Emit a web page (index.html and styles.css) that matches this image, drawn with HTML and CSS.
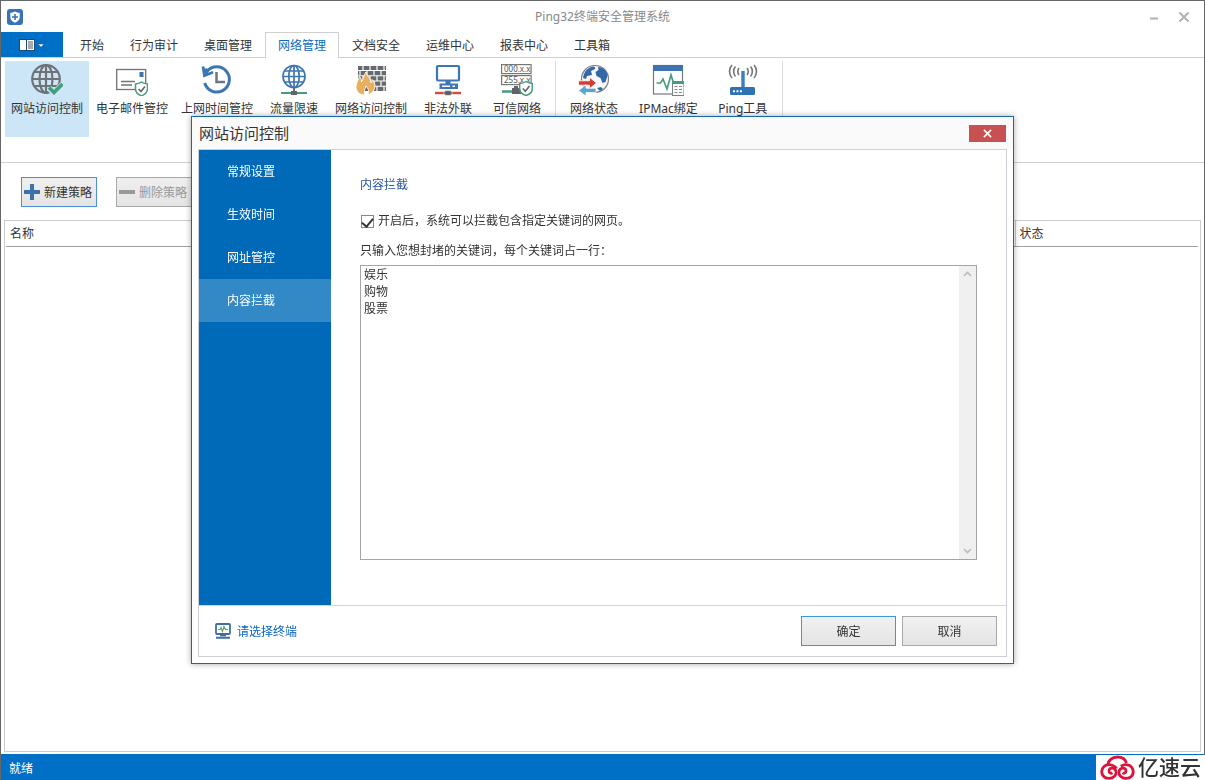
FILE: index.html
```html
<!DOCTYPE html>
<html lang="zh-CN">
<head>
<meta charset="utf-8">
<title>Ping32终端安全管理系统</title>
<link rel="stylesheet" href="styles.css">
</head>
<body>
<div class="window">
  <header class="titlebar">
    <svg class="app-icon" viewBox="0 0 16 16"><rect width="16" height="16" rx="3" fill="#3a72b8"/><path d="M8 2.500c1.500 1 3 1.300 4.700 1.300V8c0 2.800-2 4.500-4.700 5.700C5.300 12.500 3.300 10.800 3.300 8V3.800C5 3.800 6.500 3.500 8 2.500z" fill="#fff"/><path d="M8 5v6M5 8h6" stroke="#3a72b8" stroke-width="1.600"/></svg>
    <h1 class="app-title">Ping32终端安全管理系统</h1>
    <div class="window-buttons">
      <button class="win-btn" type="button" aria-label="最小化"><svg viewBox="0 0 12 12"><path d="M2 7.500h8" stroke="#b0b0b0" stroke-width="2"/></svg></button>
      <button class="win-btn" type="button" aria-label="关闭"><svg viewBox="0 0 12 12"><path d="M1.500 1.500l9 9M10.500 1.500l-9 9" stroke="#b0b0b0" stroke-width="2"/></svg></button>
    </div>
  </header>

  <nav class="tabs">
    <button class="file-tab" type="button" aria-label="文件">
      <svg viewBox="0 0 26 12"><rect x=".5" y=".5" width="15" height="11" fill="#fff" stroke="#174a7c"/><path d="M7.500 0v12" stroke="#174a7c"/><path d="M9 3h5M9 5h5M9 7h5M9 9h5" stroke="#444" stroke-width=".9"/><path d="M19 5h6l-3 3.300z" fill="#fff" stroke="#174a7c" stroke-width=".5"/></svg>
    </button>
    <button class="tab" type="button">开始</button>
    <button class="tab" type="button">行为审计</button>
    <button class="tab" type="button">桌面管理</button>
    <button class="tab active" type="button">网络管理</button>
    <button class="tab" type="button">文档安全</button>
    <button class="tab" type="button">运维中心</button>
    <button class="tab" type="button">报表中心</button>
    <button class="tab" type="button">工具箱</button>
  </nav>

  <section class="ribbon">
    <div class="group">
      <button class="tool active" type="button">
        <svg viewBox="0 0 32 32" fill="none"><g stroke="#6f7276" stroke-width="2.200"><circle cx="15" cy="15" r="13.800"/><ellipse cx="15" cy="15" rx="6.500" ry="13.800"/><path d="M15 1v28M1 15h28M3.500 8h23M3.500 22h23"/></g><path d="M18 24l5 5 8.500-8.500" stroke="#cde6f7" stroke-width="6"/><path d="M18 23.500l5 5 8.500-8.500" stroke="#3f9f78" stroke-width="3.600"/></svg>
        <span>网站访问控制</span></button>
      <button class="tool" type="button">
        <svg viewBox="0 0 32 32" fill="none"><rect x=".7" y="5.500" width="29" height="20" stroke="#707376" stroke-width="1.300"/><rect x="23.500" y="8" width="4" height="5" fill="#3c73b0"/><path d="M5 17.500h14M5 21h11" stroke="#707376" stroke-width="1.300"/><path d="M25.500 18c2 1.400 4 1.900 6 1.900v5c0 3.500-2.500 5.500-6 7-3.500-1.500-6-3.500-6-7v-5c2 0 4-.5 6-1.900z" fill="#fff" stroke="#459d79" stroke-width="1.500"/><path d="M22.500 25l2.500 2.500 4-5" stroke="#60666a" stroke-width="1.600"/></svg>
        <span>电子邮件管控</span></button>
      <button class="tool" type="button">
        <svg viewBox="0 0 32 32" fill="none"><path d="M6 7.500A12.600 12.600 0 1 1 3.700 19" stroke="#3c76b3" stroke-width="3"/><path d="M2 2.500l1.500 9 8.500-3.200" stroke="#3c76b3" stroke-width="2.800"/><path d="M4.500 4.500L6 10" stroke="#3c76b3" stroke-width="3"/><path d="M15.500 8v10H24" stroke="#70757a" stroke-width="2.500"/></svg>
        <span>上网时间管控</span></button>
      <button class="tool" type="button">
        <svg viewBox="0 0 32 32" fill="none"><g stroke="#3c76b3" stroke-width="1.700"><circle cx="16" cy="12.500" r="11"/><ellipse cx="16" cy="12.500" rx="5.200" ry="11"/><path d="M16 1.500v22M5 12.500h22M7 7h18M7 18h18"/></g><path d="M16 24v4" stroke="#6c6f72" stroke-width="2"/><path d="M3 29h26" stroke="#459d79" stroke-width="2"/><rect x="13" y="27" width="6" height="4" fill="#606468"/></svg>
        <span>流量限速</span></button>
      <button class="tool" type="button">
        <svg viewBox="0 0 32 32" fill="none"><path d="M3 4h28M3 9.200h28M3 14.400h28M3 19.600h28M3 24.800h28" stroke="#66696d" stroke-width="4.200"/><path d="M8 2v4M15 2v4M22 2v4M29 2v4M5 7v4M12 7v4M19 7v4M26 7v4M8 12v5M15 12v5M22 12v5M29 12v5M19 17v5M26 17v5M22 22v5M29 22v5" stroke="#fff" stroke-width="1.200"/><path d="M10 31C4 31 1 27 1 22.500c0-4 2.500-6 3.500-10 2 2 2 4 1.800 5.500C9 15 8.500 11 11 8c.5 4 5 6 5 11 1-.8 1.200-2 1-3.500 3 3 3.500 6 2.500 9-1 3.500-3.500 5.500-7 6.500 2-3 1.200-6-1.500-9-.8 3-2.500 4-1 9z" fill="#e8b05c" stroke="#fff" stroke-width=".9"/></svg>
        <span>网络访问控制</span></button>
      <button class="tool" type="button">
        <svg viewBox="0 0 32 32" fill="none"><rect x="5" y="2" width="22" height="14.500" rx="1" stroke="#3c76b3" stroke-width="2.200"/><path d="M16 17v3" stroke="#3c76b3" stroke-width="5"/><path d="M7.500 19.500h18.500v5.500h-18.500z" fill="#3c76b3"/><path d="M10 22.300h8M20.500 22.300h2.500" stroke="#fff" stroke-width="1.500"/><path d="M3 29h26" stroke="#d64b3b" stroke-width="2.400"/><path d="M11.500 29l2-2.500h5l2 2.500-2 2.500h-5z" fill="#606468" stroke="#fff" stroke-width=".6"/></svg>
        <span>非法外联</span></button>
      <button class="tool" type="button">
        <svg viewBox="0 0 32 32" fill="none"><rect x=".6" y=".6" width="29.500" height="9" fill="#fff" stroke="#777" stroke-width="1.200"/><rect x=".6" y="11.600" width="29.500" height="9" fill="#fff" stroke="#777" stroke-width="1.200"/><text class="ip-text" x="3" y="8">000.x.x</text><text class="ip-text" x="3" y="19">255.x.x</text><path d="M1 27.500h10" stroke="#459d79" stroke-width="2.500"/><path d="M15 22v3" stroke="#606468" stroke-width="4"/><rect x="11" y="24" width="9" height="6" fill="#606468"/><path d="M25 17.500c2 1.400 4 2 6.300 2v5c0 3.500-2.800 5.800-6.300 7-3.500-1.200-6.300-3.500-6.300-7v-5c2.300 0 4.300-.6 6.300-2z" fill="#fff" stroke="#459d79" stroke-width="1.500"/><path d="M21.800 24.500l2.500 2.700 4.200-5.200" stroke="#60666a" stroke-width="1.600"/></svg>
        <span>可信网络</span></button>
    </div>
    <div class="group wide">
      <button class="tool" type="button">
        <svg viewBox="0 0 32 32" fill="none"><circle cx="17" cy="15" r="13.500" fill="#f7f9fb" stroke="#747c86" stroke-width="1.200"/><path d="M5 14C6 8 9 4 15 2.500c2 0 2.500 1 2 2.500l-4 2 1 4-5 1-1 3zM20 3c5 0 9 4 9.500 9l-2 6-3 1-2-5-4-2-1-4 3-2zM19 24l4-1 2 2-3 2z" fill="#3467a8"/><path d="M.5 16.800h11v-3.500l7 5.700-7 5.700v-3.500H.5z" fill="#d1402f" stroke="#fff" stroke-width=".8"/><path d="M18 24.200H8v-3.500L.5 26.500 8 32v-3.500h10z" fill="#59a5cd" stroke="#fff" stroke-width=".8"/></svg>
        <span>网络状态</span></button>
      <button class="tool" type="button">
        <svg viewBox="0 0 32 32" fill="none"><rect x="1.500" y="1.500" width="29" height="28.500" fill="#fff" stroke="#73777b" stroke-width="1.200"/><path d="M1 1h30v6H1z" fill="#3c73b0"/><path d="M4.500 19h4l2.500-4 4 10 4-14 2.500 8h3" stroke="#459d79" stroke-width="1.700"/><rect x="20.500" y="17.500" width="11.500" height="14" fill="#fff" stroke="#7c8084"/><path d="M20 18.500h12" stroke="#459d79" stroke-width="3"/><path d="M22.500 22.500h3M27 22.500h3M22.500 25.500h3M27 25.500h3M22.500 28.500h3M27 28.500h3" stroke="#888"/></svg>
        <span>IPMac绑定</span></button>
      <button class="tool" type="button">
        <svg viewBox="0 0 32 32" fill="none"><path d="M16 7v18" stroke="#397dc5" stroke-width="3.400"/><rect x="3" y="23" width="25" height="8" rx="1.500" fill="#2f73b7"/><path d="M6 27.300h2M9.500 27.300h2M13 27.300h2" stroke="#fff" stroke-width="2"/><path d="M12 4c-1.600 1.800-1.600 5.200 0 7M8.500 2.500c-2.500 2.800-2.500 7.200 0 10M5 1C1.700 4.500 1.700 10.500 5 14M20 4c1.600 1.800 1.600 5.200 0 7M23.500 2.500c2.500 2.800 2.500 7.200 0 10M27 1c3.300 3.500 3.300 9.500 0 13" stroke="#72767a" stroke-width="1.600"/></svg>
        <span>Ping工具</span></button>
    </div>
  </section>

  <main class="workspace">
    <div class="actions">
      <button class="action primary" type="button"><svg viewBox="0 0 16 16"><path d="M8 0v16M0 8h16" stroke="#3a72ae" stroke-width="4"/></svg><span>新建策略</span></button>
      <button class="action" type="button" disabled><svg viewBox="0 0 16 16"><path d="M0 8h16" stroke="#999" stroke-width="4"/></svg><span>删除策略</span></button>
    </div>
    <div class="table-frame">
      <table class="policies">
        <thead><tr><th class="col-name" scope="col">名称</th><th class="col-state" scope="col">状态</th></tr></thead>
        <tbody></tbody>
      </table>
    </div>
  </main>
  <footer class="statusbar">就绪</footer>
</div>

<div class="overlay">
  <section class="dialog" role="dialog" aria-labelledby="dialog-title">
    <header class="dialog-head">
      <h2 class="dialog-title" id="dialog-title">网站访问控制</h2>
      <button class="dialog-close" type="button" aria-label="关闭"><svg viewBox="0 0 10 10"><path d="M1 1l8 8M9 1l-8 8" stroke="#fff" stroke-width="1.800"/></svg></button>
    </header>
    <div class="dialog-frame">
      <div class="dialog-body">
        <nav class="side">
          <button class="side-item" type="button">常规设置</button>
          <button class="side-item" type="button">生效时间</button>
          <button class="side-item" type="button">网址管控</button>
          <button class="side-item active" type="button">内容拦截</button>
        </nav>
        <div class="pane">
          <h3 class="pane-title">内容拦截</h3>
          <label class="check"><input type="checkbox" checked>开启后，系统可以拦截包含指定关键词的网页。</label>
          <label class="hint" for="keywords">只输入您想封堵的关键词，每个关键词占一行：</label>
          <div class="editor">
            <textarea id="keywords" class="keywords" spellcheck="false">娱乐
购物
股票</textarea>
            <div class="scroll">
              <svg viewBox="0 0 9 6"><path d="M1 5l3.500-3.500L8 5" fill="none" stroke="#bcbcbc" stroke-width="1.600"/></svg>
              <svg viewBox="0 0 9 6"><path d="M1 1l3.500 3.500L8 1" fill="none" stroke="#bcbcbc" stroke-width="1.600"/></svg>
            </div>
          </div>
        </div>
      </div>
      <footer class="dialog-foot">
        <a class="pick" href="#"><svg viewBox="0 0 16 16" fill="none"><rect x="1" y="1" width="14" height="10" rx="1" stroke="#426f9f" stroke-width="1.800"/><path d="M3 6.500h2l1-2 1.500 4L9 3.500l1.500 3H13" stroke="#5b9c6a" stroke-width="1.100"/><path d="M5 12.300h6M1 14.700h14" stroke="#426f9f" stroke-width="1.900"/></svg><span>请选择终端</span></a>
        <button class="btn default" type="button">确定</button>
        <button class="btn" type="button">取消</button>
      </footer>
    </div>
  </section>
</div>

<div class="brand">
  <svg viewBox="0 0 36 25" fill="none" stroke="#dc143c" stroke-width="2.800"><path d="M7.800 10.500C8 5.500 12 2 17.500 2c4.500 0 8 2.500 9 6"/><path d="M12.500 17.800c-1.500 1-3.500.2-3.500-1.800 0-2.200 2.200-3.500 4.300-2.700 3.300 1.200 3.700 5.500 1.200 8-3 3-8.500 2.700-11 0-3-3.300-2-9 2.500-11 3.500-1.400 8-.3 10.700 3"/><path d="M22.500 17.800c1.500 1 3.500.2 3.500-1.800 0-2.200-2.200-3.500-4.300-2.700-3.300 1.200-3.700 5.500-1.200 8 3 3 8.500 2.700 11 0 3-3.300 2-9-2.500-11-2.700-1.100-5.700-.6-8.200 1"/></svg>
  <span>亿速云</span>
</div>
</body>
</html>
```
FILE: styles.css
```css
* { box-sizing: border-box; }

body {
  margin: 0;
  font: 12px/18px "Noto Sans", "Noto Sans CJK SC", sans-serif;
  color: #333;
  background: #fff;
}

button {
  font: inherit;
  color: inherit;
  padding: 0;
  border: 0;
  background: none;
}

svg { display: block; flex: none; }
h1, h2, h3 { margin: 0; font-weight: 400; }

.window {
  display: flex;
  flex-direction: column;
  height: 100vh;
  border: 1px solid #666;
  border-bottom: 0;
}

.titlebar {
  display: grid;
  grid-template-columns: 1fr auto 1fr;
  align-items: center;
  height: 31px;
  padding: 0 6px;
}
.app-icon { width: 16px; height: 16px; }
.app-title { font-size: 12px; color: #888; }
.window-buttons { display: flex; justify-content: flex-end; gap: 18px; padding-right: 8px; }
.win-btn svg { width: 12px; height: 12px; }

.tabs {
  display: flex;
  height: 26px;
  border-bottom: 1px solid #d0d0d0;
}
.file-tab {
  display: flex;
  align-items: center;
  justify-content: center;
  width: 62px;
  margin-right: 4px;
  background: #0070c6;
}
.file-tab svg { width: 26px; height: 12px; }
.tab { padding: 3px 13px 0; }
.tab.active {
  padding: 1px 12px 0;
  border: 1px solid #d0d0d0;
  border-bottom: 0;
  margin-bottom: -1px;
  background: #fff;
  color: #0a6cc0;
}

.ribbon {
  display: flex;
  height: 105px;
  padding: 3px 0 0 4px;
  border-bottom: 1px solid #d0d0d0;
}
.group {
  display: flex;
  gap: 1px;
  height: 76px;
  margin-right: 4px;
  padding-right: 4px;
  border-right: 1px solid #dcdcdc;
}
.group.wide { gap: 5px; padding-right: 5px; }
.tool {
  display: flex;
  flex-direction: column;
  align-items: center;
  gap: 4px;
  min-width: 68px;
  padding: 3px 6px;
}
.tool.active { background: #cde6f7; }
.tool svg { width: 32px; height: 32px; }
.tool span { white-space: nowrap; }
.ip-text { font: 8px "Noto Sans", sans-serif; fill: #555; }

.workspace {
  display: flex;
  flex: 1;
  flex-direction: column;
  min-height: 0;
  padding: 14px 3px 2px;
}
.actions { display: flex; gap: 19px; padding: 0 17px 13px; }
.action {
  display: flex;
  align-items: center;
  gap: 4px;
  height: 30px;
  padding: 0 4px 0 2px;
  border: 1px solid #a8a8a8;
  background: linear-gradient(#efefef, #e4e4e4);
}
.action.primary { border-color: #4a90d9; }
.action:disabled { color: #999; }
.action svg { width: 16px; height: 16px; }
.action span { padding-top: 2px; }

.table-frame {
  flex: 1;
  padding: 0 2px 0 1px;
  border: 1px solid #ccc;
}
.policies { width: 100%; border-collapse: collapse; table-layout: fixed; }
.policies th {
  height: 25px;
  padding: 2px 4px 0;
  border-bottom: 1px solid #a0a0a0;
  font-weight: 400;
  text-align: left;
}
.col-state { width: 183px; border-left: 1px solid #ccc; }

.statusbar {
  height: 26px;
  padding: 6px 8px 0;
  background: #0070c6;
  color: #fff;
}

.overlay {
  position: fixed;
  inset: 0;
  display: grid;
  place-items: center;
}
.dialog {
  width: min(823px, 100vw);
  padding: 0 6px 6px;
  border: 1px solid #1569a5;
  background: #fff;
  box-shadow: 0 0 6px rgba(0, 0, 0, .35);
}
.dialog-head {
  display: flex;
  align-items: center;
  justify-content: space-between;
  height: 32px;
  margin: 0 -6px;
  padding: 0 7px;
  background: #fafafa;
}
.dialog-title { font-size: 15px; line-height: 22px; }
.dialog-close {
  display: flex;
  align-items: center;
  justify-content: center;
  width: 37px;
  height: 17px;
  background: #c75050;
}
.dialog-close svg { width: 9px; height: 9px; }
.dialog-frame { border: 1px solid #ccd0d8; }
.dialog-body { display: flex; border-bottom: 1px solid #d0d4dc; }

.side { display: flex; flex-direction: column; width: 132px; background: #0069b8; }
.side-item { height: 43px; padding-left: 28px; text-align: left; color: #fff; }
.side-item.active { background: #3388c6; }

.pane {
  display: flex;
  flex: 1;
  flex-direction: column;
  padding: 26px 29px 45px;
}
.pane-title { font-size: 12px; line-height: 18px; color: #2a56a0; }
.check { display: flex; align-items: center; gap: 4px; margin-top: 18px; }
.check input {
  appearance: none;
  display: flex;
  justify-content: center;
  width: 13px;
  height: 13px;
  margin: 0 0 0 1px;
  border: 1px solid #888;
  background: #fff;
}
.check input:checked::before {
  content: "";
  width: 5px;
  height: 9px;
  border: solid #333;
  border-width: 0 2px 2px 0;
  transform: rotate(40deg);
}
.hint { margin: 12px 0 5px; }
.editor { display: flex; height: 295px; border: 1px solid #a4a4a4; }
.keywords {
  flex: 1;
  padding: 0 3px;
  border: 0;
  outline: 0;
  resize: none;
  overflow: hidden;
  background: #fff;
  color: #333;
  font: inherit;
  line-height: 17px;
}
.scroll {
  display: flex;
  flex-direction: column;
  align-items: center;
  justify-content: space-between;
  width: 17px;
  padding: 5px 0;
  background: #f0f0f0;
}
.scroll svg { width: 9px; height: 6px; }

.dialog-foot { display: flex; align-items: center; gap: 6px; padding: 10px 9px 10px 16px; }
.pick {
  display: flex;
  align-items: center;
  gap: 6px;
  margin-right: auto;
  color: #0a63c0;
  text-decoration: none;
}
.pick svg { width: 16px; height: 16px; }
.pick span { padding-top: 2px; }
.btn {
  width: 95px;
  height: 30px;
  padding-top: 2px;
  border: 1px solid #a8a8a8;
  background: linear-gradient(#f1f1f1, #e4e4e4);
}
.btn.default { border-color: #3c96e0; }

.brand {
  position: fixed;
  right: 0;
  bottom: 0;
  display: flex;
  gap: 2px;
  height: 25px;
  padding: 0 4px;
  background: #fff;
  color: #333;
  font: 500 21px/22px "Noto Sans CJK SC", sans-serif;
}
.brand svg { width: 36px; height: 25px; }
```
